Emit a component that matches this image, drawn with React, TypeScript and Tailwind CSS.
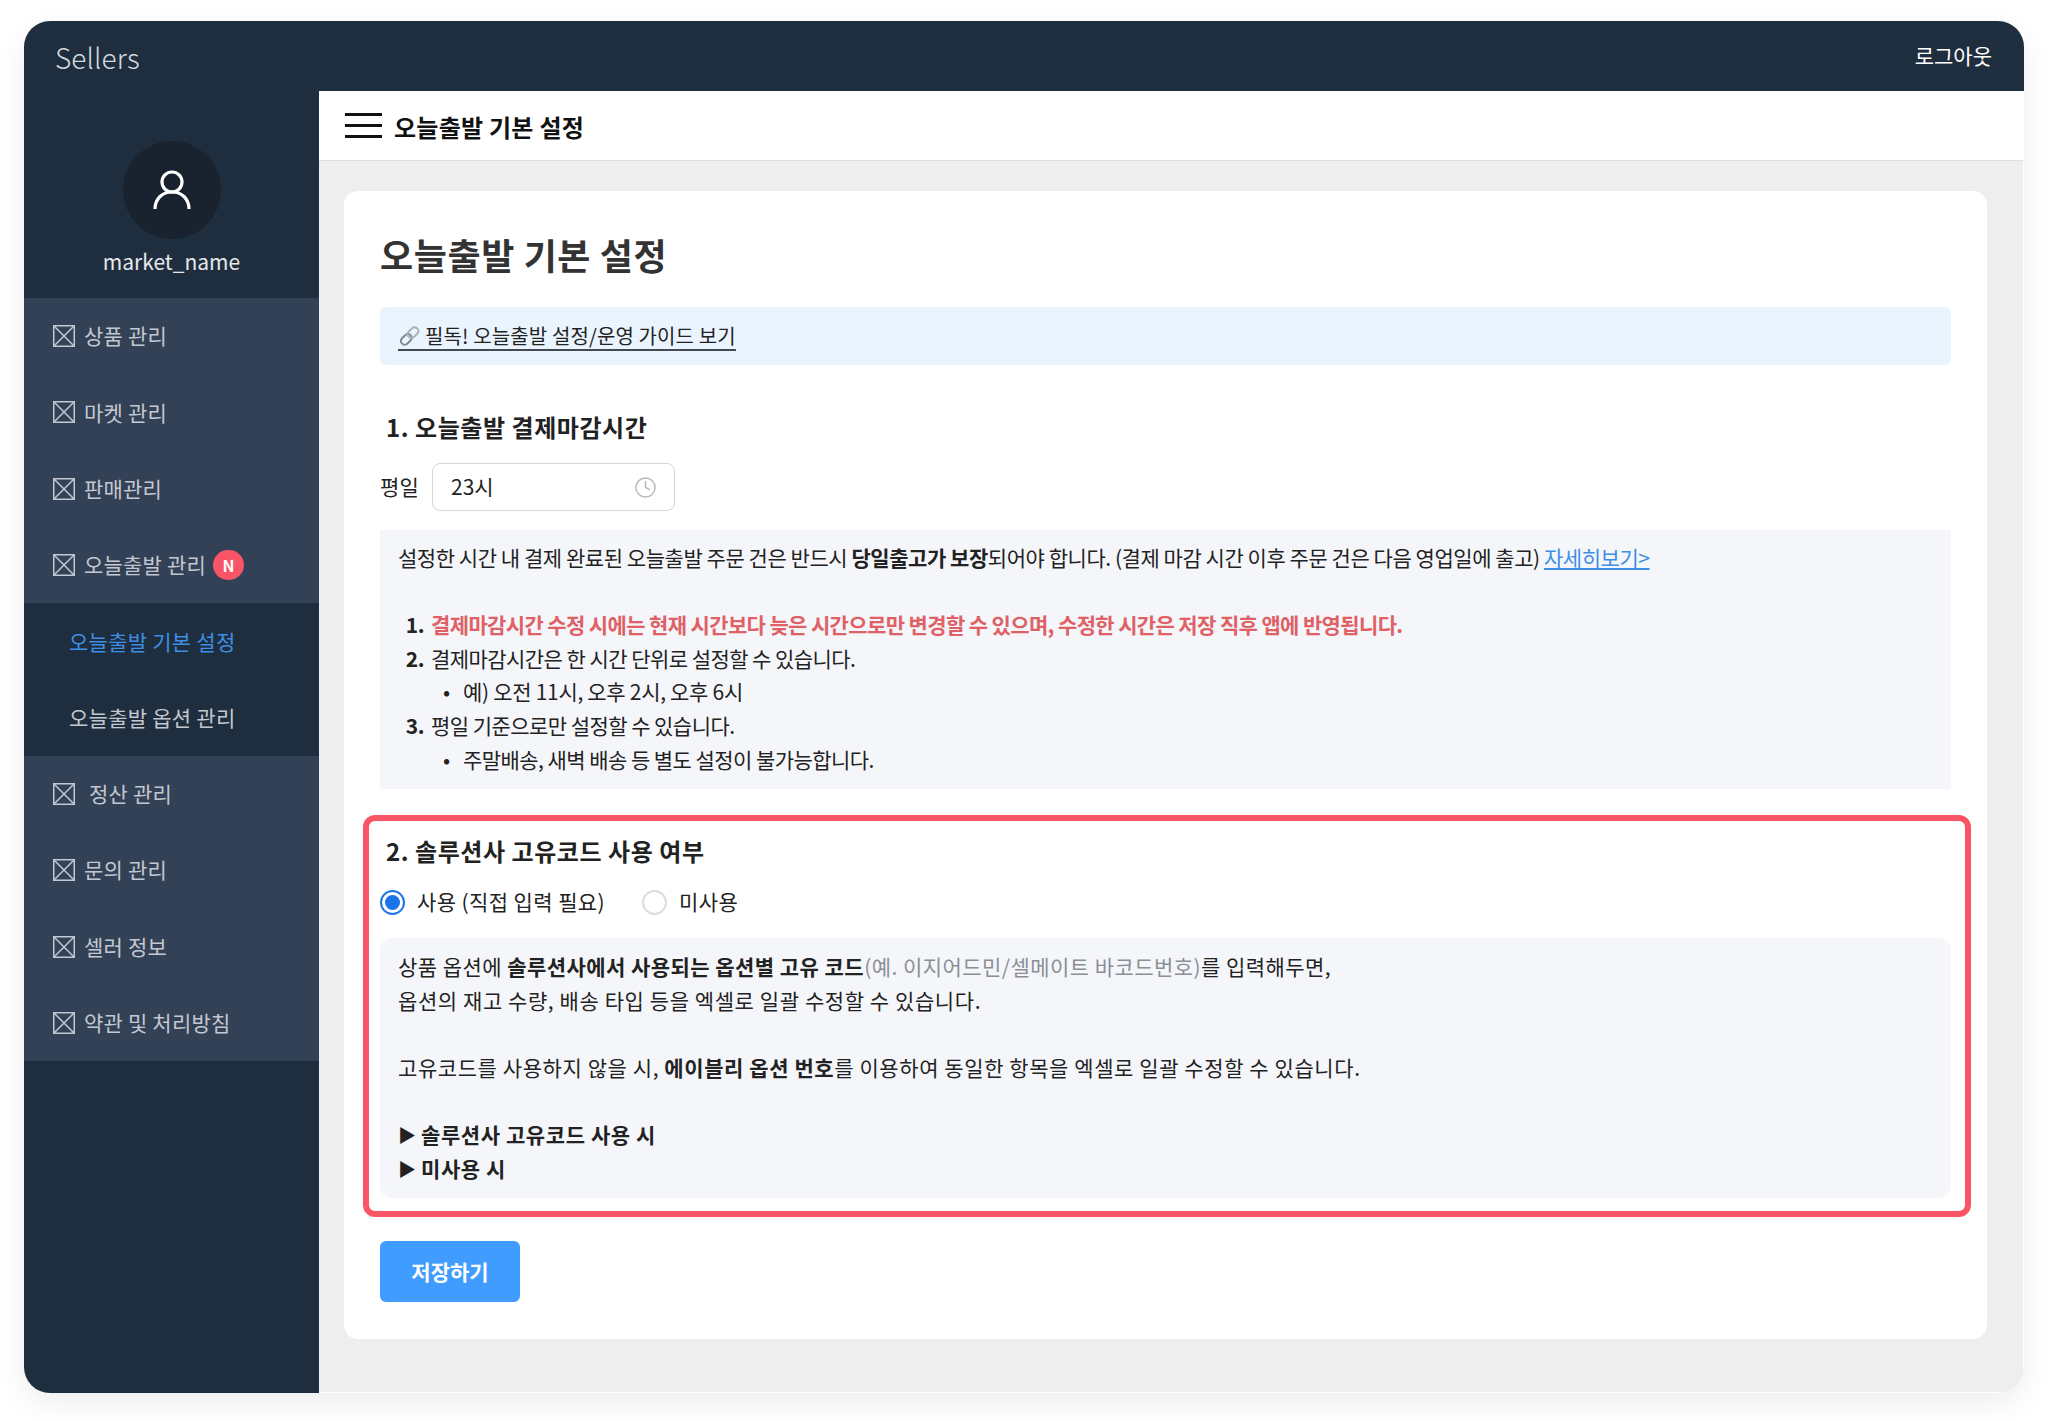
import { Clock } from 'lucide-react';

const menuTop = ['상품 관리', '마켓 관리', '판매관리'];
const menuBottom = ['문의 관리', '셀러 정보', '약관 및 처리방침'];

function BoxIcon() {
  return (
    <svg className="w-[22px] h-[22px] shrink-0 text-[#c3c8d0]" viewBox="0 0 22 22" fill="none" stroke="currentColor" strokeWidth="1.5">
      <rect x="0.75" y="0.75" width="20.5" height="20.5" />
      <path d="M1 1l20 20M21 1L1 21" />
    </svg>
  );
}

function MenuItem({ label, gap = 'gap-[9px]', badge = false }: { label: string; gap?: string; badge?: boolean }) {
  return (
    <div className={`h-[76.3px] pl-[29px] flex items-center ${gap} text-[21px] tracking-[0.2px] text-[#c3c8d0]`}>
      <BoxIcon />
      <span>{label}</span>
      {badge && (
        <span className="ml-[-2px] w-[31px] h-[30px] rounded-full bg-[#fa5566] text-white text-[16px] font-bold flex items-center justify-center">
          N
        </span>
      )}
    </div>
  );
}

function Radio({ checked, label }: { checked?: boolean; label: string }) {
  return (
    <div className="flex items-center gap-[12px]">
      <span className={`w-[25px] h-[25px] rounded-full border-2 flex items-center justify-center ${checked ? 'border-[#1c74e9]' : 'border-[#dcdcdc]'}`}>
        {checked && <span className="w-[15px] h-[15px] rounded-full bg-[#1c74e9]" />}
      </span>
      <span className="tracking-[0.4px]">{label}</span>
    </div>
  );
}

function ListNo({ n }: { n: number }) {
  return <b className="w-[33px] text-right pr-[7px]">{n}.</b>;
}

export default function App() {
  return (
    <div className="h-[1421px] bg-white pt-[21px] pl-[24px] font-['Noto_Sans_CJK_KR','Noto_Sans',sans-serif] text-[#222]">
      <div className="w-[2000px] h-[1372px] rounded-[26px] overflow-hidden flex flex-col bg-[#eeeeee] shadow-[0_10px_30px_rgba(0,0,0,0.07)]">
        {/* Top bar */}
        <header className="h-[70px] shrink-0 bg-[#1f2e3e] flex items-center justify-between pl-[31px] pr-[32px] text-white">
          <span className="mt-[2px] text-[28px] tracking-[0.1px] font-light text-[#d5dade]">Sellers</span>
          <span className="text-[21px]">로그아웃</span>
        </header>

        <div className="flex-1 flex min-h-0">
          {/* Sidebar */}
          <aside className="w-[295px] shrink-0 bg-[#1f2e3e]">
            <div className="h-[207px] flex flex-col items-center pt-[50px]">
              <div className="w-[98px] h-[98px] rounded-full bg-[#18232f] flex items-center justify-center">
                <svg className="w-[38px] h-[40px] text-white" viewBox="0 0 38 40" fill="none" stroke="currentColor" strokeWidth="3.2">
                  <circle cx="19" cy="12" r="10" />
                  <path d="M2 39c0-10 7-17 17-17s17 7 17 17" />
                </svg>
              </div>
              <div className="mt-[6px] text-[21px] leading-[32px] text-[#e6e8eb]">market_name</div>
            </div>

            <div className="bg-[#334157]">
              {menuTop.map((m) => (
                <MenuItem key={m} label={m} />
              ))}
              <MenuItem label="오늘출발 관리" badge />
              <div className="bg-[#1f2e3e]">
                <div className="h-[76.3px] pl-[45px] flex items-center text-[21px] tracking-[0.25px] text-[#3d8ee6]">오늘출발 기본 설정</div>
                <div className="h-[76.3px] pl-[45px] flex items-center text-[21px] tracking-[0.25px] text-[#c3c8d0]">오늘출발 옵션 관리</div>
              </div>
              <MenuItem label="정산 관리" gap="gap-[14px]" />
              {menuBottom.map((m) => (
                <MenuItem key={m} label={m} />
              ))}
            </div>
          </aside>

          {/* Main */}
          <main className="flex-1 min-w-0 border-r border-b border-white">
            <div className="h-[70px] bg-white border-b border-[#dfdfe3] pl-[26px] flex items-center gap-[12px]">
              <div className="w-[37px] flex flex-col gap-[8px]">
                <span className="h-[3px] bg-[#111]" />
                <span className="h-[3px] bg-[#111]" />
                <span className="h-[3px] bg-[#111]" />
              </div>
              <span className="mt-[2px] text-[24px] tracking-[0.25px] font-bold text-[#111]">오늘출발 기본 설정</span>
            </div>

            <section className="ml-[25px] mt-[30px] w-[1643px] h-[1148px] bg-white rounded-[14px] px-[36px] pt-[34px]">
              <h1 className="h-[58px] flex items-center text-[36px] tracking-[0.6px] font-bold text-[#333]">오늘출발 기본 설정</h1>

              <div className="mt-[24px] h-[58px] rounded-[6px] bg-[#eaf4fe] pl-[18px] flex items-center text-[20px] tracking-[0.12px] text-[#222]">
                <a className="inline-flex items-center h-[28px] mt-[2px] border-b-2 border-[#444a52]">
                  <svg className="w-[24px] h-[24px] mr-[3px]" viewBox="0 0 24 24" fill="none" strokeLinecap="round">
                    <g transform="rotate(-45 12 12)">
                      <rect x="1" y="8" width="12" height="7.5" rx="3.75" stroke="#7d858e" strokeWidth="2" />
                      <rect x="10.5" y="8" width="12" height="7.5" rx="3.75" stroke="#a9b0b8" strokeWidth="2" />
                    </g>
                  </svg>
                  필독! 오늘출발 설정/운영 가이드 보기
                </a>
              </div>

              <h2 className="mt-[44px] pl-[6px] h-[36px] flex items-center text-[24px] tracking-[0.55px] font-bold text-[#222]">1. 오늘출발 결제마감시간</h2>

              <div className="mt-[18px] flex items-center gap-[13px] text-[21px]">
                <span className="tracking-[0.2px]">평일</span>
                <div className="w-[243px] h-[48px] rounded-[8px] border border-[#d6d6d6] pl-[18px] pr-[17px] flex items-center justify-between">
                  <span>23시</span>
                  <Clock className="w-[23px] h-[23px] text-[#b5b9bd]" strokeWidth={1.5} />
                </div>
              </div>

              <div className="mt-[19px] h-[259px] bg-[#f5f6fa] pl-[18px] pt-[11px] text-[21px] leading-[33.6px] tracking-[-0.45px]">
                <p>
                  설정한 시간 내 결제 완료된 오늘출발 주문 건은 반드시 <b>당일출고가 보장</b>되어야 합니다. (결제 마감 시간 이후 주문 건은 다음 영업일에 출고){' '}
                  <a className="text-[#3d8ee6] underline">자세히보기&gt;</a>
                </p>
                <div className="h-[33.6px]" />
                <ol>
                  <li className="flex">
                    <ListNo n={1} />
                    <b className="text-[#df6166] tracking-[-0.63px]">결제마감시간 수정 시에는 현재 시간보다 늦은 시간으로만 변경할 수 있으며, 수정한 시간은 저장 직후 앱에 반영됩니다.</b>
                  </li>
                  <li className="flex">
                    <ListNo n={2} />
                    <span className="tracking-[-0.55px]">결제마감시간은 한 시간 단위로 설정할 수 있습니다.</span>
                  </li>
                  <li className="flex pl-[45px]">
                    <span className="w-[20px]">•</span>
                    <span className="tracking-[-0.3px]">예) 오전 11시, 오후 2시, 오후 6시</span>
                  </li>
                  <li className="flex">
                    <ListNo n={3} />
                    <span className="tracking-[-0.55px]">평일 기준으로만 설정할 수 있습니다.</span>
                  </li>
                  <li className="flex pl-[45px]">
                    <span className="w-[20px]">•</span>
                    <span className="tracking-[-0.55px]">주말배송, 새벽 배송 등 별도 설정이 불가능합니다.</span>
                  </li>
                </ol>
              </div>

              {/* Highlighted section */}
              <div className="mt-[26px] ml-[-17px] mr-[-20px] h-[402px] border-[6px] border-[#fa5566] rounded-[12px] pl-[11px] pr-[14px] pt-[12px]">
                <h2 className="pl-[6px] h-[36px] flex items-center text-[24px] tracking-[0.55px] font-bold text-[#222]">2. 솔루션사 고유코드 사용 여부</h2>
                <div className="mt-[15px] h-[36px] flex items-center gap-[37px] text-[21px]">
                  <Radio checked label="사용 (직접 입력 필요)" />
                  <Radio label="미사용" />
                </div>
                <div className="mt-[18px] h-[260px] rounded-[12px] bg-[#f5f6fa] pl-[18px] pt-[12px] text-[21px] leading-[33.6px] tracking-[0.58px]">
                  <p className="tracking-[0.45px]">
                    상품 옵션에 <b>솔루션사에서 사용되는 옵션별 고유 코드</b>
                    <span className="text-[#8a8f96]">(예. 이지어드민/셀메이트 바코드번호)</span>를 입력해두면,
                  </p>
                  <p>옵션의 재고 수량, 배송 타입 등을 엑셀로 일괄 수정할 수 있습니다.</p>
                  <div className="h-[33.6px]" />
                  <p>
                    고유코드를 사용하지 않을 시, <b>에이블리 옵션 번호</b>를 이용하여 동일한 항목을 엑셀로 일괄 수정할 수 있습니다.
                  </p>
                  <div className="h-[33.6px]" />
                  <p className="font-bold flex">
                    <span className="w-[23px] text-[18px]">▶</span>솔루션사 고유코드 사용 시
                  </p>
                  <p className="font-bold flex">
                    <span className="w-[23px] text-[18px]">▶</span>미사용 시
                  </p>
                </div>
              </div>

              <button className="mt-[24px] w-[140px] h-[61px] rounded-[6px] bg-[#419cff] text-white text-[21px] font-bold">저장하기</button>
            </section>
          </main>
        </div>
      </div>
    </div>
  );
}
